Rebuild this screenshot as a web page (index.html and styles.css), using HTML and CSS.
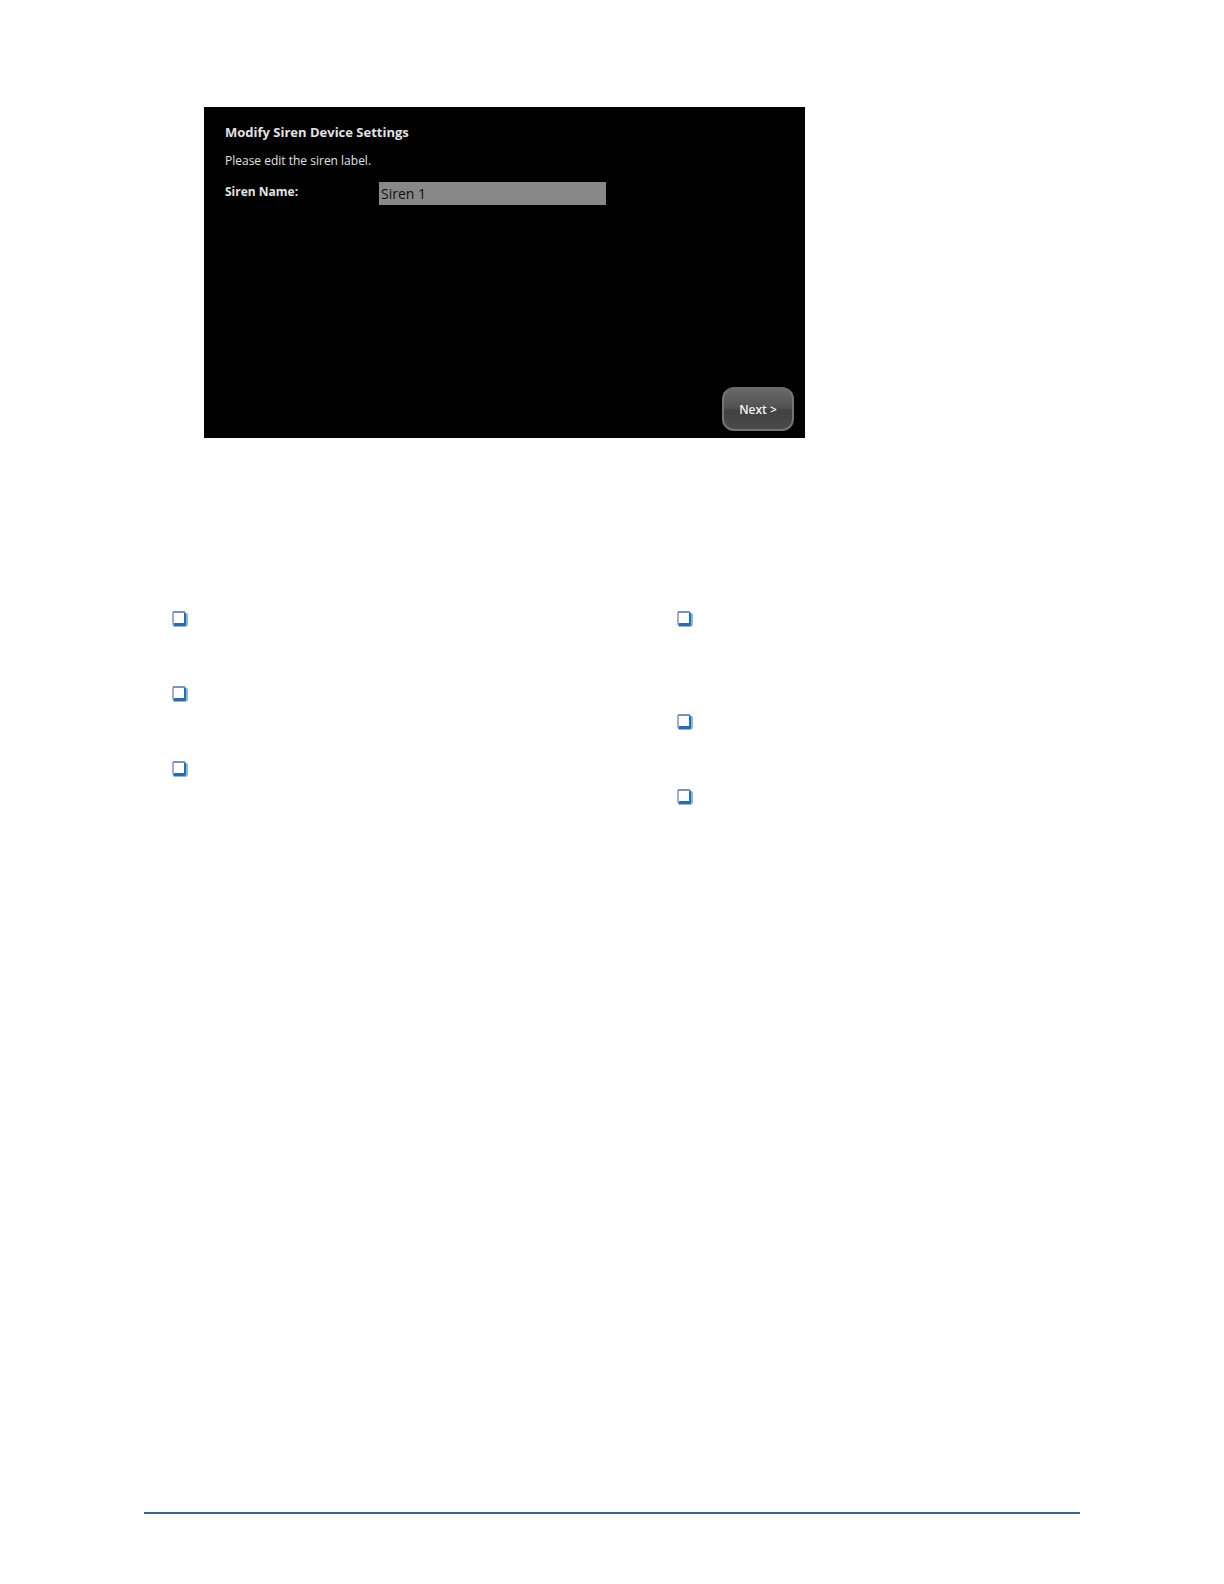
FILE: index.html
```html
<!DOCTYPE html>
<html lang="en">
<head>
<meta charset="utf-8">
<meta name="viewport" content="width=device-width, initial-scale=1">
<title>Modify Siren Device Settings</title>
<link rel="stylesheet" href="styles.css">
</head>
<body>
<svg width="0" height="0" class="defs" aria-hidden="true">
  <symbol id="box" viewBox="0 0 16 16">
    <path d="M13 1L16 3V14L14 16H2L1 14H13Z" fill="#7dbce4"/>
    <path d="M1 1H13L14 3V14L13 15H2L1 14Z" fill="#3568a0"/>
    <path d="M0 1H2V14H0Z" fill="#a9abc8"/>
    <path d="M1 0H13V2H1Z" fill="#7c93b8"/>
    <path d="M2 2H12V12H2Z" fill="#fff"/>
  </symbol>
</svg>
<div class="page">
  <main>
    <form class="panel">
      <h1 class="title">Modify Siren Device Settings</h1>
      <p class="hint">Please edit the siren label.</p>
      <div class="field">
        <label class="label" for="siren">Siren Name:</label>
        <input class="input" id="siren" type="text" value="Siren 1">
      </div>
      <button class="next" type="button">Next &gt;</button>
    </form>
    <div class="columns">
      <ul class="list">
        <li class="item"><svg class="bullet"><use href="#box"/></svg></li>
        <li class="item"><svg class="bullet"><use href="#box"/></svg></li>
        <li class="item"><svg class="bullet"><use href="#box"/></svg></li>
      </ul>
      <ul class="list">
        <li class="item item-tall"><svg class="bullet"><use href="#box"/></svg></li>
        <li class="item"><svg class="bullet"><use href="#box"/></svg></li>
        <li class="item"><svg class="bullet"><use href="#box"/></svg></li>
      </ul>
    </div>
  </main>
  <footer class="footer"></footer>
</div>
</body>
</html>
```
FILE: styles.css
```css
* { box-sizing: border-box; }
body { margin: 0; background: #fff; font-family: "Open Sans", "Noto Sans", sans-serif; }
.defs { position: absolute; }
.page {
  min-height: 100vh;
  padding: 107px 144px 70px;
  display: flex;
  flex-direction: column;
  justify-content: space-between;
}
.panel {
  display: flex;
  flex-direction: column;
  max-width: 601px;
  min-height: 331px;
  margin-left: 60px;
  padding: 15px 11px 7px 21px;
  background: #000;
  color: #e2e2e2;
}
.title { margin: 0; font-size: 13px; line-height: 20px; font-weight: 700; }
.hint { margin: 9px 0 11px; font-size: 12px; line-height: 20px; }
.field { display: flex; align-items: flex-start; }
.label { width: 154px; font-size: 12px; line-height: 20px; font-weight: 700; }
.input {
  width: 227px;
  height: 23px;
  padding: 0 2px;
  border: 0;
  background: #888;
  color: #111;
  font: 14px "Open Sans", sans-serif;
}
.next {
  align-self: flex-end;
  width: 72px;
  height: 44px;
  margin-top: auto;
  padding: 0;
  border: 2px solid #747474;
  border-top-color: #6a6a6a;
  border-radius: 12px;
  background: linear-gradient(#686868 0%, #525252 46%, #424242 54%, #4a4a4a 100%);
  color: #f2f2f2;
  font: 600 12px "Open Sans", sans-serif;
}
.columns {
  display: grid;
  grid-template-columns: 1fr 1fr;
  column-gap: 102px;
  margin-top: 173px;
  padding-left: 28px;
}
.list { margin: 0; padding: 0; list-style: none; }
.item { min-height: 75px; }
.item-tall { min-height: 103px; }
.bullet { display: block; width: 16px; height: 16px; }
.footer { border-top: 2px solid #39678c; }
```
